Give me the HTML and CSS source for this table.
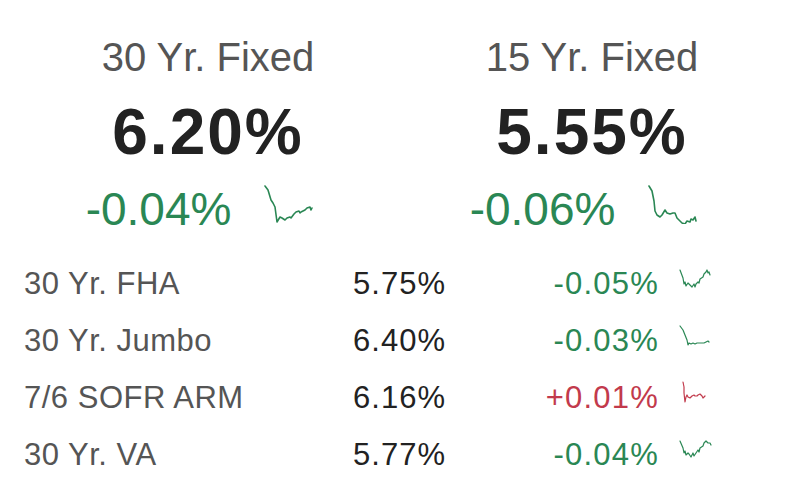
FILE: index.html
```
<!DOCTYPE html>
<html>
<head>
<meta charset="utf-8">
<link rel="stylesheet" href="styles.css">
</head>
<body>
<div class="page">
  <div class="top">
    <div class="feature">
      <div class="title">30 Yr. Fixed</div>
      <div class="big">6.20%</div>
      <div class="change-row">
        <span class="change">-0.04%</span>
        <svg class="spark-big" width="52" height="40" viewBox="0 0 52 40"><polyline points="3,2 6,6 9,16 11,19 13,23 15,38 18,33 20,34 23,36 25,34 28,33 29,34 32,30 34,28 37,27 38,29 39,28 43,26 45,24 48,23 49,26 50,24"/></svg>
      </div>
    </div>
    <div class="feature">
      <div class="title">15 Yr. Fixed</div>
      <div class="big">5.55%</div>
      <div class="change-row">
        <span class="change">-0.06%</span>
        <svg class="spark-big" width="52" height="40" viewBox="0 0 52 40"><polyline points="3,2 6,7 8,17 9,27 11,31 14,33 16,31 19,26 21,29 24,30 27,29 29,29 31,34 34,37 36,39 39,40 41,37 44,38 45,35 47,36 49,33 50,37"/></svg>
      </div>
    </div>
  </div>
  <div class="rows">
    <div class="row">
      <span class="label">30 Yr. FHA</span>
      <span class="rate">5.75%</span>
      <span class="delta down">-0.05%</span>
      <svg class="spark down" width="36" height="28" viewBox="0 0 36 28"><polyline points="3,5 6,13 7,19 8,17 9,21 11,18 13,20 15,22 17,19 18,22 19,19 21,17 22,18 23,14 26,12 27,9 29,7 30,5 31,8 32,7 33,10"/></svg>
    </div>
    <div class="row">
      <span class="label">30 Yr. Jumbo</span>
      <span class="rate">6.40%</span>
      <span class="delta down">-0.03%</span>
      <svg class="spark down" width="36" height="28" viewBox="0 0 36 28"><polyline points="3,4 6,8 8,13 10,18 11,23 12,21 14,22 16,21 18,22 20,21 22,21 24,21 26,21 27,21 29,20 31,19 32,20"/></svg>
    </div>
    <div class="row">
      <span class="label">7/6 SOFR ARM</span>
      <span class="rate">6.16%</span>
      <span class="delta up">+0.01%</span>
      <svg class="spark up" width="36" height="28" viewBox="0 0 36 28"><polyline points="6,3 7,8 7,14 8,23 9,18 10,16 11,18 13,19 15,17 17,16 18,17 20,17 21,16 23,15 25,17 26,19 27,18 28,17"/></svg>
    </div>
    <div class="row">
      <span class="label">30 Yr. VA</span>
      <span class="rate">5.77%</span>
      <span class="delta down">-0.04%</span>
      <svg class="spark down" width="36" height="28" viewBox="0 0 36 28"><polyline points="3,5 6,12 7,17 8,15 9,19 11,17 12,18 14,21 16,17 17,20 19,17 21,14 22,16 23,12 26,10 27,7 29,5 30,6 31,7 33,7 34,9"/></svg>
    </div>
  </div>
</div>
</body>
</html>
```
FILE: styles.css
```
html, body {
  margin: 0;
  padding: 0;
  background: #ffffff;
}
.page {
  width: 800px;
  height: 486px;
  font-family: "Liberation Sans", Arial, sans-serif;
  overflow: hidden;
}
.top {
  display: grid;
  grid-template-columns: 1fr 1fr;
  padding: 34px 16px 0;
}
.feature {
  display: flex;
  flex-direction: column;
  align-items: center;
}
.title {
  font-size: 40px;
  line-height: 46px;
  color: #555555;
}
.big {
  margin-top: 16px;
  font-size: 64px;
  line-height: 72px;
  font-weight: 700;
  letter-spacing: 2px;
  color: #222222;
}
.change-row {
  margin-top: 15px;
  display: flex;
  align-items: flex-start;
  gap: 31px;
  padding-right: 16px;
}
.change {
  font-size: 46px;
  line-height: 52px;
  color: #2a8754;
}
.spark-big {
  margin-top: 1px;
}
.spark-big polyline {
  fill: none;
  stroke: #2a8754;
  stroke-width: 1.6;
  stroke-linejoin: round;
  stroke-linecap: round;
}
.rows {
  margin-top: 20px;
  padding-left: 24px;
}
.row {
  display: grid;
  grid-template-columns: 301px 121px 213px 53px;
  height: 57px;
  line-height: 57px;
  font-size: 31px;
}
.label {
  color: #555555;
  letter-spacing: 0.5px;
}
.rate {
  text-align: right;
  color: #222222;
  letter-spacing: 1px;
}
.delta {
  text-align: right;
  letter-spacing: 1.2px;
}
.delta.down { color: #2a8754; }
.delta.up { color: #c23a4c; }
.spark {
  margin: 10px 0 0 18px;
}
.spark polyline {
  fill: none;
  stroke-width: 1.2;
  stroke-linejoin: round;
  stroke-linecap: round;
}
.spark.down polyline { stroke: #2a8754; }
.spark.up polyline { stroke: #c23a4c; }
```
